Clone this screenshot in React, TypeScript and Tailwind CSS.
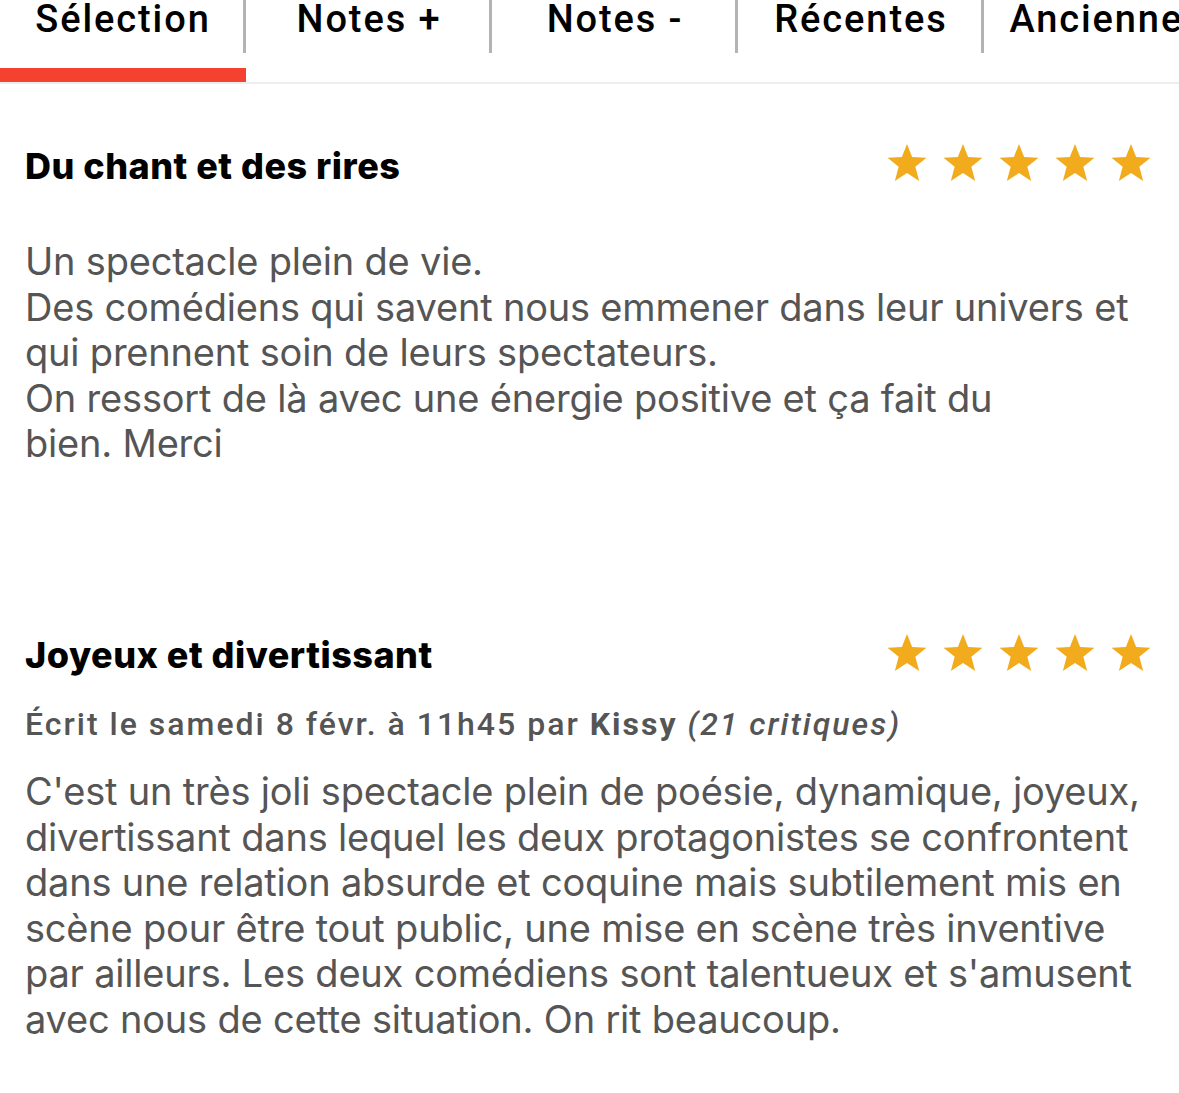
import React from "react";

const tabs = ["Sélection", "Notes +", "Notes -", "Récentes", "Anciennes"];

function Star() {
  return (
    <svg width="42" height="40" viewBox="0 0 24 23" className="shrink-0">
      <polygon
        points="12,0.6 14.95,8.1 23.2,8.5 16.8,13.7 19,21.8 12,17.3 5,21.8 7.2,13.7 0.8,8.5 9.05,8.1"
        fill="#f3ab1e"
      />
    </svg>
  );
}

function Stars() {
  return (
    <div className="flex gap-[14px]">
      {[0, 1, 2, 3, 4].map((i) => (
        <Star key={i} />
      ))}
    </div>
  );
}

function Lines({ lines }: { lines: string[] }) {
  return (
    <>
      {lines.map((l, i) => (
        <span key={i} className="block whitespace-nowrap">
          {l}
        </span>
      ))}
    </>
  );
}

export default function App() {
  return (
    <div className="w-[1179px] h-[1093px] bg-white overflow-hidden">
      <div className="relative flex h-[84px] border-b-2 border-[#eeeeee] overflow-hidden">
        {tabs.map((t, i) => (
          <div key={t} className="relative w-[246px] shrink-0 h-full">
            <div
              className="text-center text-[38px] leading-[38px] text-black whitespace-nowrap font-medium tracking-[1.9px]"
              style={{ fontFamily: "Roboto, sans-serif" }}
            >
              {t}
            </div>
            {i < 4 && (
              <div className="absolute right-0 top-0 h-[53px] w-[3px] bg-[#b3b3b3]" />
            )}
            {i === 0 && (
              <div className="absolute left-0 bottom-0 h-[14px] w-full bg-[#f5412f]" />
            )}
          </div>
        ))}
      </div>

      <div className="px-[25px]" style={{ fontFamily: "Inter, sans-serif" }}>
        <div className="flex items-center justify-between mt-[58px] h-[48px]">
          <h2 className="text-[36px] font-extrabold text-black tracking-[0.5px]">
            Du chant et des rires
          </h2>
          <div className="mr-[2px] mb-[6px]">
            <Stars />
          </div>
        </div>
        <p className="mt-[49px] text-[38px] leading-[45.6px] text-[#555555] tracking-[-0.2px]">
          <Lines
            lines={[
              "Un spectacle plein de vie.",
              "Des comédiens qui savent nous emmener dans leur univers et",
              "qui prennent soin de leurs spectateurs.",
              "On ressort de là avec une énergie positive et ça fait du",
              "bien. Merci",
            ]}
          />
        </p>

        <div className="flex items-center justify-between mt-[164px] h-[48px]">
          <h2 className="text-[36px] font-extrabold text-black tracking-[0.5px]">
            Joyeux et divertissant
          </h2>
          <div className="mr-[2px] mb-[4px]">
            <Stars />
          </div>
        </div>
        <div
          className="mt-[25px] text-[32px] leading-[40px] text-[#555555] font-medium tracking-[2px] whitespace-nowrap"
          style={{ fontFamily: "Roboto, sans-serif" }}
        >
          Écrit le samedi 8 févr. à 11h45 par <span className="font-bold">Kissy</span>{" "}
          <span className="italic">(21 critiques)</span>
        </div>
        <p className="mt-[25px] text-[38px] leading-[45.6px] text-[#555555] tracking-[-0.2px]">
          <Lines
            lines={[
              "C'est un très joli spectacle plein de poésie, dynamique, joyeux,",
              "divertissant dans lequel les deux protagonistes se confrontent",
              "dans une relation absurde et coquine mais subtilement mis en",
              "scène pour être tout public, une mise en scène très inventive",
              "par ailleurs. Les deux comédiens sont talentueux et s'amusent",
              "avec nous de cette situation. On rit beaucoup.",
            ]}
          />
        </p>
      </div>
    </div>
  );
}
